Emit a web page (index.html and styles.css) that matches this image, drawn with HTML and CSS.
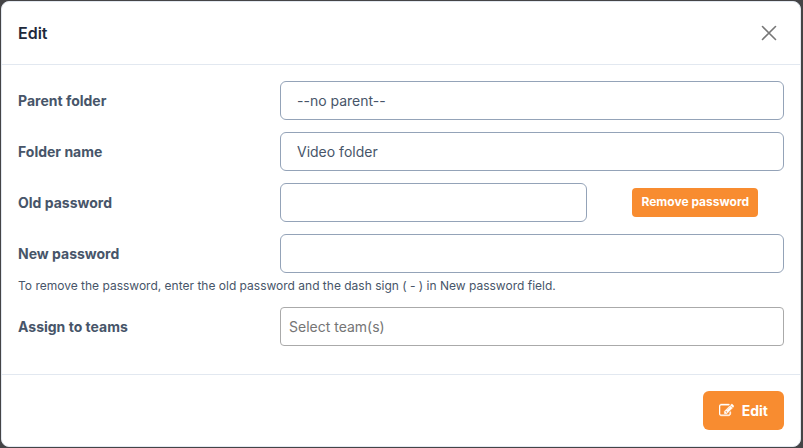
FILE: index.html
```html
<!DOCTYPE html>
<html lang="en">
<head>
    <meta charset="UTF-8">
    <meta name="viewport" content="width=device-width, initial-scale=1.0">
    <title>Edit</title>
    <link rel="stylesheet" href="styles.css">
</head>
<body>

    <form class="modal" role="dialog" aria-labelledby="modalTitle">
        <div class="modal-header">
            <h5 class="modal-title" id="modalTitle">Edit</h5>
            <button type="button" class="btn-close" aria-label="Close">
                <svg viewBox="0 0 16 16" width="16" height="16"><path d="M1.5 1.5l13 13M14.5 1.5l-13 13"/></svg>
            </button>
        </div>

        <div class="modal-body">
            <div class="form-row">
                <label for="parent">Parent folder</label>
                <select id="parent" class="form-control">
                    <option>--no parent--</option>
                </select>
            </div>
            <div class="form-row">
                <label for="name">Folder name</label>
                <input type="text" id="name" class="form-control" value="Video folder">
            </div>
            <div class="form-row">
                <label for="oldPassword">Old password</label>
                <div class="password-group">
                    <input type="password" id="oldPassword" class="form-control">
                    <button type="button" class="btn btn-sm">Remove password</button>
                </div>
            </div>
            <div class="form-row">
                <label for="newPassword">New password</label>
                <input type="password" id="newPassword" class="form-control">
            </div>
            <p class="hint">To remove the password, enter the old password and the dash sign ( - ) in New password field.</p>
            <div class="form-row">
                <label for="teams">Assign to teams</label>
                <input type="text" id="teams" class="form-control team-select" placeholder="Select team(s)">
            </div>
        </div>

        <div class="modal-footer">
            <button type="submit" class="btn">
                <!-- pencil on a square -->
                <svg class="icon" viewBox="0 0 1792 1792" width="15" height="15"><path d="M888 1184l116-116-152-152-116 116v56h96v96h56zm440-720q-16-16-33 1l-350 350q-17 17-1 33t33-1l350-350q17-17 1-33zm80 594v190q0 119-84.5 203.5t-203.5 84.5h-832q-119 0-203.5-84.5t-84.5-203.5v-832q0-119 84.5-203.5t203.5-84.5h832q63 0 117 25 15 7 18 23 3 17-9 29l-49 49q-14 14-32 8-23-6-45-6h-832q-66 0-113 47t-47 113v832q0 66 47 113t113 47h832q66 0 113-47t47-113v-126q0-13 9-22l64-64q15-15 35-7t20 29zm-96-738l288 288-672 672h-288v-288zm444 132l-92 92-288-288 92-92q28-28 68-28t68 28l152 152q28 28 28 68t-28 68z"/></svg>
                Edit
            </button>
        </div>
    </form>

</body>
</html>
```

FILE: styles.css
```css
* {
    box-sizing: border-box;
}
body {
    margin: 0;
    padding: 1px 2px 1px 1px;
    background-color: #444446;
    color: #475569;
    font-family: Inter, sans-serif;
    font-size: 14px;
    line-height: 21px;
}
.modal {
    background-color: #fff;
    border: 1px solid #e2e8f0;
    border-radius: 8px;
}
.modal-header {
    display: flex;
    align-items: center;
    justify-content: space-between;
    padding: 20px 16px;
    border-bottom: 1px solid #e2e8f0;
}
.modal-title {
    margin: 0;
    color: #1e293b;
    font-size: 16px;
    font-weight: 600;
    line-height: 22px;
}
.btn-close {
    display: flex;
    padding: 0 7px;
    border: none;
    background: none;
    cursor: pointer;
}
.btn-close svg {
    fill: none;
    stroke: #777;
    stroke-width: 1.6;
    stroke-linecap: round;
}
.modal-body {
    padding: 16px 16px 28px;
}
.form-row {
    display: grid;
    grid-template-columns: 1fr 2fr;
    column-gap: 10px;
    align-items: center;
}
.form-row + .form-row {
    margin-top: 12px;
}
label {
    font-weight: 700;
}
.form-control {
    width: 100%;
    height: 39px;
    padding: 8px 16px;
    border: 1px solid #94a3b8;
    border-radius: 6px;
    background-color: #fff;
    color: #475569;
    font: inherit;
    appearance: none; /* no dropdown arrow */
}
.team-select {
    padding: 8px;
    border-color: #aaa;
    border-radius: 4px;
}
.team-select::placeholder {
    color: #757575;
}
.password-group {
    display: grid;
    grid-template-columns: 19fr 11fr;
    column-gap: 20px;
    align-items: center;
    justify-items: center;
}
.hint {
    margin: 4px 0 12px;
    font-size: 12px;
    line-height: 18px;
}
.btn {
    display: flex;
    align-items: center;
    gap: 8px;
    padding: 9px 16px;
    border: none;
    border-radius: 6px;
    background-color: #f88c30;
    color: #fff;
    font: inherit;
    font-weight: 700;
    cursor: pointer;
}
.btn-sm {
    padding: 4px 9px 6px;
    border-radius: 4px;
    font-size: 12px;
    line-height: 19px;
}
.icon {
    fill: currentColor;
    stroke: currentColor;
    stroke-width: 50;
}
.modal-footer {
    display: flex;
    justify-content: flex-end;
    padding: 16px;
    border-top: 1px solid #e2e8f0;
}
```
